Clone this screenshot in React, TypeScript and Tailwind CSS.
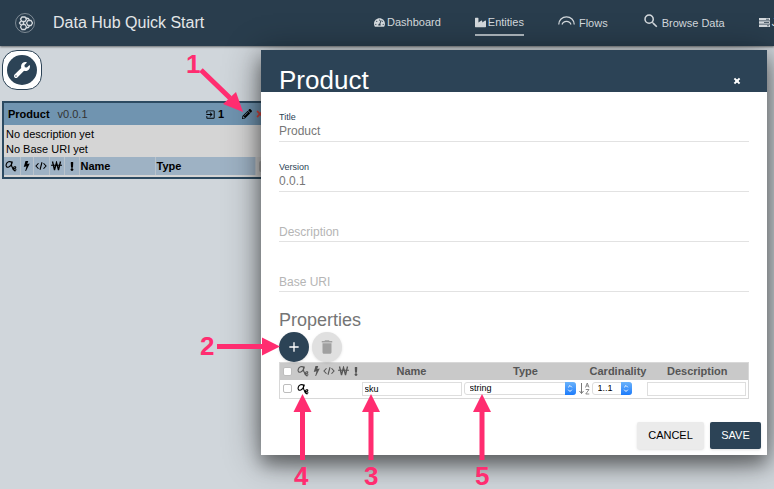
import React from "react";
import { FaTachometerAlt, FaIndustry, FaWrench, FaPencilAlt, FaTimes, FaExclamation } from "react-icons/fa";
import { MdExitToApp, MdDelete, MdAdd, MdSearch } from "react-icons/md";

function KeyIcon({ className = "" }: { className?: string }) {
  return (
    <svg viewBox="0 0 24 24" className={`h-3 w-3 ${className}`} fill="none" stroke="currentColor" strokeWidth="2.200" strokeLinecap="round" strokeLinejoin="round">
      <path d="M13.500 4.500C9.500 1.500 4 4 2.500 8.500 1 13 4 15.500 7.500 14 11.500 12.500 13.500 9 14 4" />
      <path d="M14 4c-1.500 4-1.500 8 .5 10.500M14.500 14.500c1 3.500 3 6.500 5.500 7.500M15.500 17.500c3 .5 6.500-.5 6-3-.5-2-4-1-4.500 1.500M19 21l3-1.500" />
    </svg>
  );
}

function BoltIcon() {
  return (
    <svg viewBox="0 0 14 20" className="mx-auto h-[10px] w-[7px]" fill="currentColor">
      <path d="M5 0h5.500L8.500 6 13.500 5 6 20H4.500L7 10.500 1.500 12Z" />
    </svg>
  );
}

function CodeIcon() {
  return (
    <svg viewBox="0 0 24 20" className="mx-auto h-[10px] w-3" fill="none" stroke="currentColor" strokeWidth="2.200">
      <path d="M7 4.500 2 10l5 5.500M17 4.500 22 10l-5 5.500M14 2.500 10 17.500" />
    </svg>
  );
}

function WonIcon() {
  return (
    <svg viewBox="0 0 22 20" className="mx-auto h-[10px] w-[11px]" fill="none" stroke="currentColor" strokeWidth="2.600">
      <path d="M3 1l4 17L11 3l4 15L19 1" />
      <path d="M0 8.500h22" strokeWidth="2" />
    </svg>
  );
}

function HubLogo() {
  return (
    <svg viewBox="0 0 40 40" className="h-5 w-5 shrink-0" fill="none" stroke="#d5dade">
      <circle cx="20" cy="20" r="19" strokeWidth="1.500" opacity=".65" />
      <g strokeWidth="2.600">
        <path d="M14 8h6l3 4-3 5h-6l-3-5Z" />
        <path d="M14 23h6l3 5-3 5h-6l-3-5Z" />
        <path d="M26 15h6l3 5-3 5h-6l-3-5Z" />
        <path d="M12 16l-3 4 3 4M22 10l5 1 2 4M22 30l5-1 2-4M17 17v6" />
      </g>
    </svg>
  );
}

function FlowsIcon() {
  return (
    <svg viewBox="0 0 34 18" className="mb-1 h-[9px] w-[17px]" fill="none" stroke="currentColor" strokeWidth="2.500">
      <path d="M1.500 17a15.500 15.500 0 0 1 31 0M8 17a9.500 9.500 0 0 1 18 0" />
    </svg>
  );
}

function JobsIcon() {
  return (
    <svg viewBox="0 0 22 18" className="h-[9px] w-[11px] shrink-0" fill="currentColor">
      <path d="M0 0h22v5H0zM0 6.500h22v5H0zM0 13h22v5H0z" />
      <path d="M14 1.500h6v2h-6zM10 8h10v2H10zM16 14.500h4v2h-4z" fill="#52616d" />
    </svg>
  );
}

function SortIcon() {
  return (
    <svg viewBox="0 0 22 26" className="h-[13px] w-[11px] shrink-0" fill="none" stroke="#777" strokeWidth="2">
      <path d="M5 2v21M1 18l4 5 4-5" />
      <path d="M13 11l3.500-9 3.500 9M14.500 8h4M13.500 15h6.500l-6.500 9h7" strokeWidth="1.700" />
    </svg>
  );
}

function NavLink({ children, active = false }: { children: React.ReactNode; active?: boolean }) {
  return (
    <a href="#" className={`flex h-6 shrink-0 items-center gap-[2px] border-b-2 text-[11px] ${active ? "border-[#aeb7be]" : "border-transparent"}`}>
      {children}
    </a>
  );
}

function Field({ id, label, value }: { id: string; label: string; value?: string }) {
  return (
    <div className="relative flex h-[50px] flex-col justify-end border-b border-[#e2e2e2] pb-[2px]">
      <label
        htmlFor={id}
        className={value ? "text-[9px] leading-3 text-[#2c4356]" : "absolute bottom-px left-0 text-[12px] leading-4 text-[#b5b5b5]"}
      >
        {label}
      </label>
      <input id={id} defaultValue={value} className="w-full bg-transparent text-[12px] leading-4 text-[#777] outline-none" />
    </div>
  );
}

function PickList({ label, value, className }: { label: string; value: string; className: string }) {
  return (
    <div className={`relative h-[13px] ${className}`}>
      <select aria-label={label} defaultValue={value} className="block h-full w-full appearance-none rounded-[3px] border border-[#ddd] bg-white pl-[5px] text-[9px] leading-[11px] text-black">
        <option>{value}</option>
      </select>
      <span className="pointer-events-none absolute inset-y-0 right-0 flex w-[11px] items-center justify-center rounded-r-[3px] bg-gradient-to-b from-[#69b2fb] to-[#1a7bfb]">
        <svg viewBox="0 0 10 14" className="h-[9px] w-[6px]" fill="none" stroke="white" strokeWidth="1.600">
          <path d="M2 5l3-3 3 3M2 9l3 3 3-3" />
        </svg>
      </span>
    </div>
  );
}

const tick = "block h-[9px] w-[9px] appearance-none rounded-[2px] border border-[#bdbdbd] bg-white";
const cellInput = "block h-[14px] w-full border border-[#dedede] bg-white px-[2px] text-[9px] leading-3 text-black outline-none";

function EntityCard() {
  return (
    <section className="mt-[11px] ml-[2px] h-[78px] w-[276px] overflow-hidden border-2 border-[#2c4a61] bg-[#d5d5d5] text-[11px] text-black">
      <header className="flex h-[22px] items-center bg-[#7094b0] px-1">
        <h2 className="font-bold">Product</h2>
        <span className="ml-2 flex-1 text-[#333]">v0.0.1</span>
        <MdExitToApp className="h-[11px] w-[11px]" />
        <b className="mr-[18px] ml-[2px]">1</b>
        <button aria-label="Edit entity" className="mr-[3px]"><FaPencilAlt className="h-[10px] w-[10px]" /></button>
        <button aria-label="Delete entity" className="mr-[7px]"><FaTimes className="h-[10px] w-[10px] text-[#d9453d]" /></button>
      </header>
      <p className="px-[2px] pt-[2px] leading-[15px]">No description yet<br />No Base URI yet</p>
      <table className="w-full table-fixed">
        <thead>
          <tr className="h-[18px] bg-[#9eb2c4] text-left [&>th]:border-r [&>th]:border-[#b9c3cc] [&>th]:p-0">
            <th className="w-[16px]"><KeyIcon className="ml-[1px]" /></th>
            <th className="w-[13px]"><BoltIcon /></th>
            <th className="w-[16px]"><CodeIcon /></th>
            <th className="w-[15px]"><WonIcon /></th>
            <th className="w-[15px]"><FaExclamation className="mx-auto h-[9px] w-[6px]" /></th>
            <th className="w-[76px]"><span className="pl-[1px]">Name</span></th>
            <th className="w-[100px]"><span className="pl-[1px]">Type</span></th>
            <th className="bg-[#ccc]"><span className="ml-[3px] block h-[11px] w-4 rounded-[2px] bg-[#aaa]" /></th>
          </tr>
        </thead>
      </table>
    </section>
  );
}

function PropertiesTable() {
  return (
    <table className="w-full table-fixed border border-[#d8d8d8] text-[11px] text-[#555]">
      <thead>
        <tr className="h-[17px] bg-[#c9c9c9] [&>th]:p-0">
          <th className="w-[16px]"><input type="checkbox" aria-label="Select all" className={`${tick} ml-[3px]`} /></th>
          <th className="w-[16px]"><KeyIcon className="ml-[1px]" /></th>
          <th className="w-[10px]"><BoltIcon /></th>
          <th className="w-[15px]"><CodeIcon /></th>
          <th className="w-[13px]"><WonIcon /></th>
          <th className="w-[12px]"><FaExclamation className="mx-auto h-[9px] w-[6px]" /></th>
          <th className="w-[100px]">Name</th>
          <th className="w-[128px]">Type</th>
          <th className="w-[57px]">Cardinality</th>
          <th>Description</th>
        </tr>
      </thead>
      <tbody>
        <tr className="h-[19px] [&>td]:p-0">
          <td><input type="checkbox" aria-label="Select sku" className={`${tick} ml-[3px]`} /></td>
          <td><KeyIcon className="ml-[1px] text-black" /></td>
          <td colSpan={4} />
          <td><input aria-label="Property name" defaultValue="sku" className={cellInput} /></td>
          <td><div className="flex items-center gap-[3px] pl-[2px]"><PickList label="Type" value="string" className="w-[112px]" /><SortIcon /></div></td>
          <td><div className="pl-[2px]"><PickList label="Cardinality" value="1..1" className="w-10" /></div></td>
          <td><div className="pr-[2px]"><input aria-label="Property description" className={cellInput} /></div></td>
        </tr>
      </tbody>
    </table>
  );
}

function EntityDialog() {
  return (
    <div className="absolute inset-x-0 top-[50px] flex justify-end pr-[7px]">
      <div role="dialog" aria-label="Edit Product" className="w-[506px] bg-white shadow-[0_10px_16px_rgba(0,0,0,0.35),0_4px_34px_rgba(0,0,0,0.45)]">
        <header className="flex h-[42px] items-end justify-between bg-[#2c4356] pr-[26px] pl-[18px] text-white">
          <h1 className="text-[26px] leading-6">Product</h1>
          <button aria-label="Close" className="mb-[7px]"><FaTimes className="h-2 w-2" stroke="currentColor" strokeWidth="50" /></button>
        </header>
        <div className="px-[18px]">
          <Field id="title" label="Title" value="Product" />
          <Field id="version" label="Version" value="0.0.1" />
          <Field id="description" label="Description" />
          <Field id="base-uri" label="Base URI" />
          <h2 className="pt-[17px] text-[18px] leading-[22px] text-[#757575]">Properties</h2>
          <div className="flex gap-[3px] pt-px">
            <button aria-label="Add property" className="flex h-[30px] w-[30px] items-center justify-center rounded-full bg-[#2c4356] text-white shadow-sm"><MdAdd className="h-4 w-4" /></button>
            <button aria-label="Delete property" className="flex h-[30px] w-[30px] items-center justify-center rounded-full bg-[#e0e0e0] text-[#a0a0a0] shadow-sm"><MdDelete className="h-[18px] w-[18px]" /></button>
          </div>
          <PropertiesTable />
        </div>
        <footer className="flex justify-end gap-[6px] px-[6px] pt-[23px] pb-[6px] text-[11px] font-medium">
          <button className="h-[27px] w-[67px] rounded-[2px] bg-[#ebebeb] text-black shadow">CANCEL</button>
          <button className="h-[27px] w-[51px] rounded-[2px] bg-[#2c4356] text-white shadow">SAVE</button>
        </footer>
      </div>
    </div>
  );
}

function Callouts() {
  return (
    <div className="pointer-events-none absolute inset-0 text-[26px] leading-[26px] font-bold text-[#ff2d70]">
      <svg width="774" height="489" className="absolute top-0 left-0" fill="#ff2d70" stroke="#ff2d70">
        <g strokeWidth="5" fill="none">
          <path d="M201 70L230 98M217 346.500H265M302.500 460V410M371 460V410M482 460V410" />
        </g>
        <path stroke="none" d="M243 112L223 104L236 92ZM280 346.500L262 337.500V355.500ZM302.500 394L293.500 412H311.500ZM371 394L362 412H380ZM482 394L473 412H491Z" />
      </svg>
      <span className="absolute top-[51px] left-[186px]">1</span>
      <span className="absolute top-[333px] left-[200px]">2</span>
      <span className="absolute top-[463px] left-[364px]">3</span>
      <span className="absolute top-[463px] left-[294px]">4</span>
      <span className="absolute top-[463px] left-[475px]">5</span>
    </div>
  );
}

export default function App() {
  return (
    <div className="relative min-h-screen overflow-hidden bg-[#d0d6db] font-['Liberation_Sans',Arial,sans-serif]">
      <header className="flex h-[46px] items-center overflow-hidden bg-[#293d4d] pl-[15px] text-[#d5dade] shadow-[0_1px_2px_rgba(0,0,0,0.5)]">
        <HubLogo />
        <div className="ml-[18px] w-[321px] shrink-0 text-[16px] leading-5 text-[#e3e6e8]">Data Hub Quick Start</div>
        <nav className="flex items-center gap-[34px] pt-[1px]">
          <NavLink><FaTachometerAlt className="h-[11px] w-[11px]" />Dashboard</NavLink>
          <NavLink active><FaIndustry className="h-[11px] w-[11px]" />Entities</NavLink>
          <NavLink><FlowsIcon /><span className="pt-[2px] pl-[2px]">Flows</span></NavLink>
          <NavLink><MdSearch className="mb-1 h-[18px] w-[18px]" /><span className="pt-[2px]">Browse Data</span></NavLink>
          <NavLink><JobsIcon />Jobs</NavLink>
        </nav>
      </header>
      <main>
        <button aria-label="Tools" className="mt-1 ml-[2px] flex h-10 w-10 items-center justify-center rounded-[15px] border border-[#2c4356] bg-white">
          <span className="flex h-[30px] w-[30px] items-center justify-center rounded-full bg-[#2c4356] text-white"><FaWrench className="h-4 w-4" /></span>
        </button>
        <EntityCard />
      </main>
      <EntityDialog />
      <Callouts />
    </div>
  );
}
